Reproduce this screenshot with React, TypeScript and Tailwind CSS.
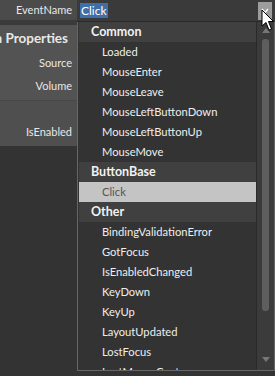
import React from 'react';

const FONT = { fontFamily: 'Lato, "Noto Sans", sans-serif' };

type Row = { kind: 'group' | 'item'; label: string; selected?: boolean };

const ROWS: Row[] = [
  { kind: 'group', label: 'Common' },
  { kind: 'item', label: 'Loaded' },
  { kind: 'item', label: 'MouseEnter' },
  { kind: 'item', label: 'MouseLeave' },
  { kind: 'item', label: 'MouseLeftButtonDown' },
  { kind: 'item', label: 'MouseLeftButtonUp' },
  { kind: 'item', label: 'MouseMove' },
  { kind: 'group', label: 'ButtonBase' },
  { kind: 'item', label: 'Click', selected: true },
  { kind: 'group', label: 'Other' },
  { kind: 'item', label: 'BindingValidationError' },
  { kind: 'item', label: 'GotFocus' },
  { kind: 'item', label: 'IsEnabledChanged' },
  { kind: 'item', label: 'KeyDown' },
  { kind: 'item', label: 'KeyUp' },
  { kind: 'item', label: 'LayoutUpdated' },
  { kind: 'item', label: 'LostFocus' },
  { kind: 'item', label: 'LostMouseCapture' },
];

function Cursor() {
  return (
    <svg className="absolute left-[261px] top-[9px]" width="14" height="23" viewBox="0 0 14 23">
      <path d="M1 1 L1 17 L5 13.5 L8 21 L10.5 20 L7.5 12.5 L12.5 12.5 Z" fill="#fff" stroke="#000" strokeWidth="1" />
    </svg>
  );
}

function EventRow({ row }: { row: Row }) {
  if (row.kind === 'group') {
    return (
      <div className="h-[20px] flex items-center pl-[12px] bg-[#404040] text-[12.5px] font-bold text-[#f2f2f2]">
        {row.label}
      </div>
    );
  }
  return (
    <div
      className={`h-[20px] flex items-center pl-[23px] text-[11.2px] ${
        row.selected ? 'bg-[#c4c4c4] text-[#555]' : 'text-[#eeeeee]'
      }`}
    >
      {row.label}
    </div>
  );
}

export default function App() {
  return (
    <div className="relative w-[275px] h-[376px] overflow-hidden bg-[#333333] flex" style={FONT}>
      {/* property labels */}
      <div className="w-[77px] flex flex-col text-[11px] text-[#e8e8e8]">
        <div className="h-[20px] bg-[#4b4b4b] flex items-center justify-end pr-[5px]">EventName</div>
        <div className="h-[5px] bg-[#3a3a3a]" />
        <div className="h-[75px] bg-[#535353] flex flex-col">
          <div className="h-[27px] flex items-center justify-end overflow-hidden pr-[9px] whitespace-nowrap text-[13.5px] font-bold">
            <span className="shrink-0">Common Properties</span>
          </div>
          <div className="h-[22px] flex items-center justify-end pr-[5px]">Source</div>
          <div className="h-[24px] flex items-center justify-end pr-[5px]">Volume</div>
        </div>
        <div className="h-[46px] bg-[#4f4f4f] border-t border-[#474747] flex items-end justify-end pr-[5px] pb-[6px]">
          IsEnabled
        </div>
      </div>

      {/* combobox + dropdown */}
      <div className="flex-1 flex flex-col">
        <div className="h-[22px] bg-[#3a3a3a] border-b border-[#2a2a2a] flex items-center pl-[3px] pr-[3px]">
          <span className="bg-[#3f6ea8] text-white text-[12px] leading-[15px] px-[1px]">Click</span>
          <div className="ml-auto w-[14px] h-[18px] bg-[#9d9d9d] flex items-center justify-center">
            <svg width="8" height="6" viewBox="0 0 8 6">
              <path d="M1 1 L4 4.5 L7 1" fill="none" stroke="#fff" strokeWidth="1.4" />
            </svg>
          </div>
        </div>
        <div className="h-[349px] border-l border-b border-r border-[#666] bg-[#333333] flex overflow-hidden">
          <div className="flex-1 pl-[1px] border-r border-[#2a2a2a]">
            {ROWS.map((r) => (
              <EventRow key={r.label} row={r} />
            ))}
          </div>
          <div className="w-[17px] bg-[#3b3b3b] flex flex-col items-center">
            <svg className="mt-[6px]" width="8" height="5" viewBox="0 0 8 5">
              <path d="M0 5 L4 0 L8 5 Z" fill="#777" />
            </svg>
            <div className="mt-[6px] w-[7px] h-[272px] rounded-[3px] bg-[#5e5e5e]" />
            <svg className="mt-[46px]" width="8" height="5" viewBox="0 0 8 5">
              <path d="M0 0 L8 0 L4 5 Z" fill="#777" />
            </svg>
          </div>
        </div>
      </div>
      <Cursor />
    </div>
  );
}
